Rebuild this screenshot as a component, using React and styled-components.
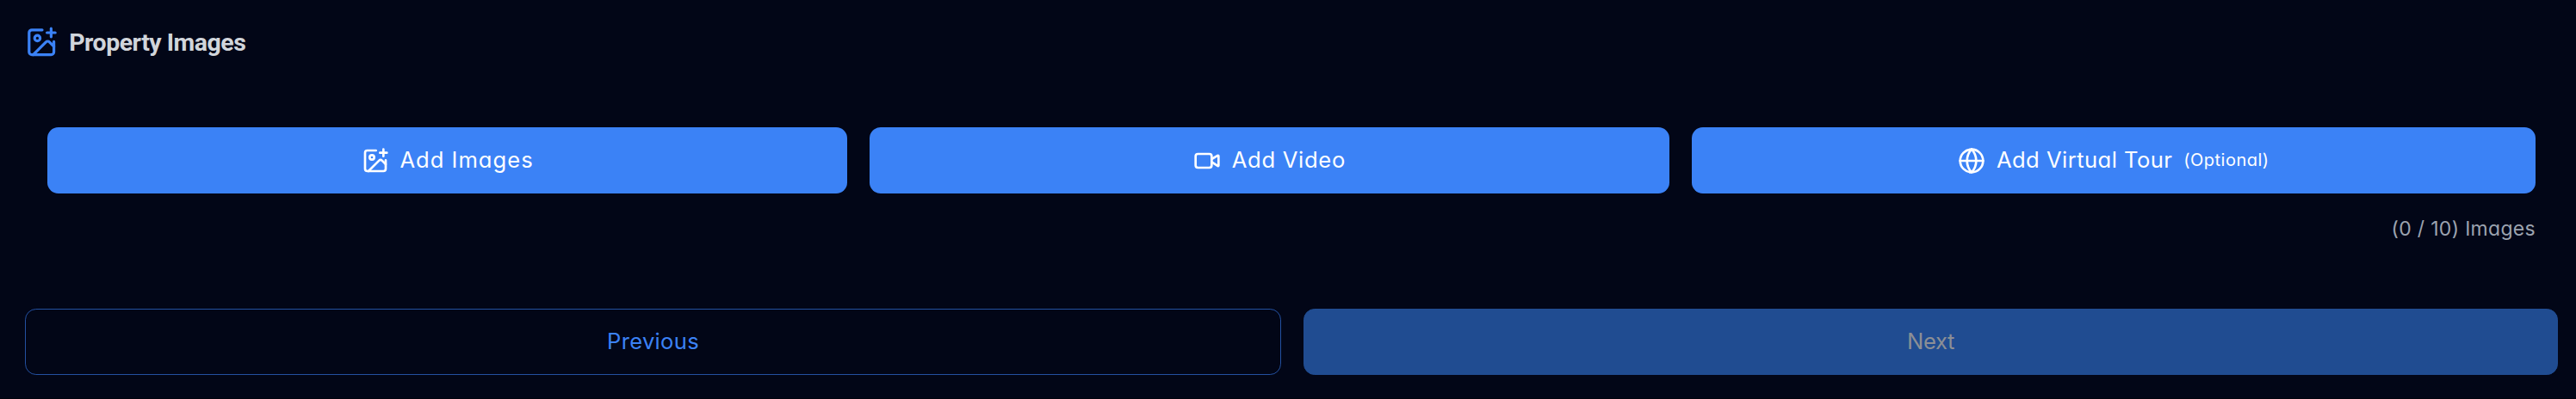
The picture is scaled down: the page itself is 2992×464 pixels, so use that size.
import styled, { createGlobalStyle } from "styled-components";
import { ImagePlus, Video, Globe } from "lucide-react";

const colorBg = '#020617';
const colorBlue = '#3b82f6';
const colorBlueDark = '#204c91';

const GlobalStyle = createGlobalStyle`
    * {
        box-sizing: border-box;
    }
    body {
        margin: 0;
        background-color: ${colorBg};
        font-family: Inter, "Noto Sans", sans-serif;
        font-feature-settings: "cv11";
    }
`;

const Section = styled.section`
    height: 464px;
    padding: 29px 21px 27px 29px;
    display: flex;
    flex-direction: column;
    background-color: ${colorBg};
    border-bottom: 1px solid #01030d;
`;

const Header = styled.header`
    height: 40px;
    display: flex;
    align-items: center;
    gap: 12.8px;
    color: ${colorBlue};
`;

const Title = styled.h2`
    margin: 0;
    padding-top: 1px;
    font-family: Roboto, sans-serif;
    font-weight: 700;
    font-size: 28.5px;
    line-height: 40px;
    letter-spacing: -0.5px;
    white-space: nowrap;
    color: #d1d5db;
`;

const MediaPanel = styled.div`
    margin-top: 79px;
    padding: 0 26px;
`;

const MediaActions = styled.div`
    display: flex;
    gap: 25.6px;
`;

const MediaButton = styled.button`
    flex: ${props => props.$grow} 1 0;
    height: 77px;
    padding: 0;
    display: flex;
    align-items: center;
    justify-content: center;
    gap: 12.8px;
    border: 0;
    border-radius: 12.8px;
    background-color: ${colorBlue};
    color: #fff;
    font: inherit;
    font-size: 25.6px;
`;

const Label = styled.span`
    display: inline-block;
    padding-bottom: 2px;
    letter-spacing: ${props => props.$spacing || 0}px;
    white-space: nowrap;
`;

const Optional = styled(Label)`
    padding-bottom: 1px;
    font-size: 20px;
`;

const Counter = styled.p`
    margin: 24px 0 0;
    text-align: right;
    font-size: 23px;
    line-height: 34px;
    letter-spacing: 0.3px;
    color: #9ca3af;
`;

const Footer = styled.footer`
    margin-top: auto;
    display: flex;
    gap: 26px;
`;

const NavButton = styled.button`
    flex: ${props => props.$grow} 1 0;
    height: 77px;
    padding: 0;
    border: 1px solid ${props => props.disabled ? colorBlueDark : '#2350a0'};
    border-radius: 12.8px;
    background-color: ${props => props.disabled ? colorBlueDark : 'transparent'};
    color: ${props => props.disabled ? '#8c8f95' : colorBlue};
    font: inherit;
    font-size: 25.6px;
`;

export default function PropertyImages () {
    return (
        <Section>
            <GlobalStyle />
            <Header>
                <ImagePlus size={38.4} />
                <Title>Property Images</Title>
            </Header>
            <MediaPanel>
                <MediaActions>
                    <MediaButton $grow={929}>
                        <ImagePlus size={32} />
                        <Label $spacing={1}>Add Images</Label>
                    </MediaButton>
                    <MediaButton $grow={929}>
                        <Video size={32} />
                        <Label $spacing={0.7}>Add Video</Label>
                    </MediaButton>
                    <MediaButton $grow={980}>
                        <Globe size={32} />
                        <Label $spacing={0.45}>Add Virtual Tour</Label>
                        <Optional $spacing={0.5}>(Optional)</Optional>
                    </MediaButton>
                </MediaActions>
                <Counter>(0 / 10) Images</Counter>
            </MediaPanel>
            <Footer>
                <NavButton $grow={1459}><Label $spacing={0.3}>Previous</Label></NavButton>
                <NavButton $grow={1457} disabled><Label $spacing={-0.4}>Next</Label></NavButton>
            </Footer>
        </Section>
    )
}
